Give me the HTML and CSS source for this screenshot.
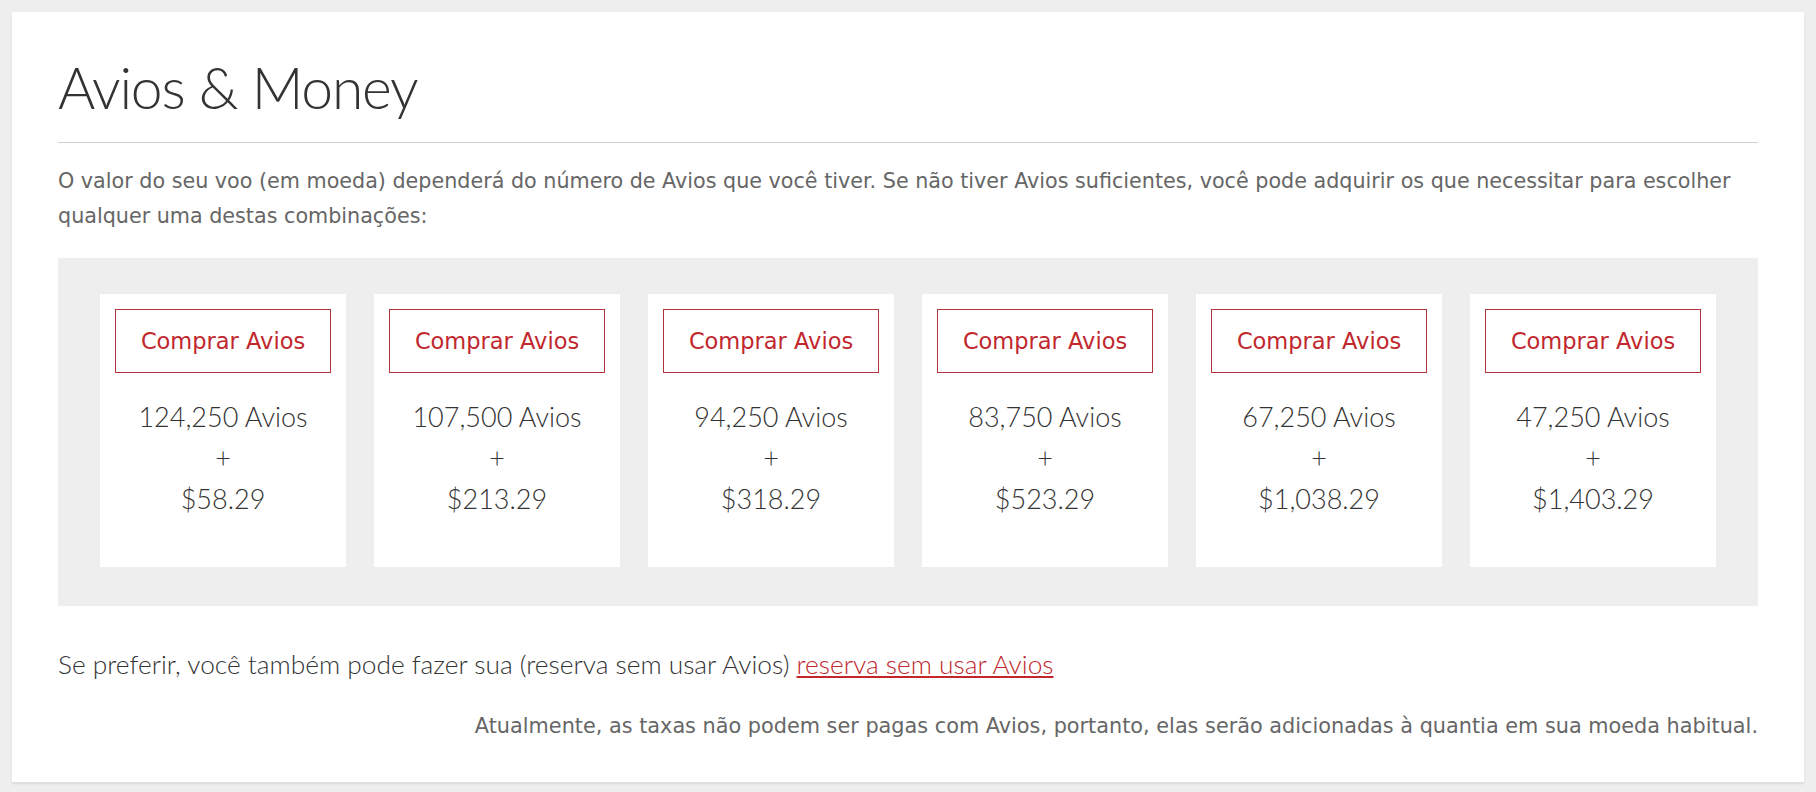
FILE: index.html
```html
<!DOCTYPE html>
<html lang="pt">
<head>
  <meta charset="UTF-8" />
  <meta name="viewport" content="width=device-width, initial-scale=1.0"/>
  <title>Avios &amp; Money</title>
  <link rel="stylesheet" href="styles.css">
</head>
<body>
  <div class="panel">
    <h1 class="title">Avios &amp; Money</h1>
    <hr class="rule">
    <p class="intro">O valor do seu voo (em moeda) dependerá do número de Avios que você tiver. Se não tiver Avios suficientes, você pode adquirir os que necessitar para escolher qualquer uma destas combinações:</p>

    <div class="options">
      <div class="option">
        <a class="buy" href="#">Comprar Avios</a>
        <div class="amount">124,250 Avios</div>
        <div class="amount">+</div>
        <div class="amount">$58.29</div>
      </div>
      <div class="option">
        <a class="buy" href="#">Comprar Avios</a>
        <div class="amount">107,500 Avios</div>
        <div class="amount">+</div>
        <div class="amount">$213.29</div>
      </div>
      <div class="option">
        <a class="buy" href="#">Comprar Avios</a>
        <div class="amount">94,250 Avios</div>
        <div class="amount">+</div>
        <div class="amount">$318.29</div>
      </div>
      <div class="option">
        <a class="buy" href="#">Comprar Avios</a>
        <div class="amount">83,750 Avios</div>
        <div class="amount">+</div>
        <div class="amount">$523.29</div>
      </div>
      <div class="option">
        <a class="buy" href="#">Comprar Avios</a>
        <div class="amount">67,250 Avios</div>
        <div class="amount">+</div>
        <div class="amount">$1,038.29</div>
      </div>
      <div class="option">
        <a class="buy" href="#">Comprar Avios</a>
        <div class="amount">47,250 Avios</div>
        <div class="amount">+</div>
        <div class="amount">$1,403.29</div>
      </div>
    </div>

    <p class="cash">Se preferir, você também pode fazer sua (reserva sem usar Avios) <a href="#">reserva sem usar Avios</a></p>
    <p class="note">Atualmente, as taxas não podem ser pagas com Avios, portanto, elas serão adicionadas à quantia em sua moeda habitual.</p>
  </div>
</body>
</html>
```

FILE: styles.css
```css
body {
  margin: 0;
  padding: 12px 12px 10px;
  background: #eeeeee;
  font-family: "DejaVu Sans", Verdana, sans-serif;
  color: #333;
}
.panel {
  background: #fff;
  padding: 41px 46px 39px;
  box-shadow: 0 2px 2px rgba(0, 0, 0, 0.08);
}
.title {
  margin: 0;
  font-family: Lato, sans-serif;
  font-weight: 300;
  font-size: 57px;
  letter-spacing: -1.2px;
  line-height: 1.2;
  color: #333;
}
.rule {
  margin: 21px 0 0;
  border: 0;
  border-top: 1px solid #cfcfcf;
}
.intro {
  margin: 21px 0 24px;
  font-size: 20.7px;
  line-height: 35px;
  color: #666;
}
.options {
  display: flex;
  gap: 28px;
  background: #eeeeee;
  padding: 36px 42px 39px;
}
.option {
  flex: 1;
  background: #fff;
  padding: 15px 15px 48px;
  text-align: center;
}
.buy {
  display: block;
  height: 62px;
  line-height: 62px;
  border: 1px solid #b3343d;
  color: #c1272d;
  font-size: 22.5px;
  text-decoration: none;
  margin-bottom: 23px;
}
.amount {
  font-family: Lato, sans-serif;
  font-weight: 300;
  font-size: 27px;
  line-height: 41px;
  color: #333;
}
.cash {
  margin: 43px 0 0;
  font-family: Lato, sans-serif;
  font-weight: 300;
  font-size: 26.3px;
  line-height: 30px;
  color: #333;
}
.cash a {
  color: #c1272d;
}
.note {
  margin: 30px 0 0;
  text-align: right;
  font-size: 20.8px;
  line-height: 34px;
  color: #666;
}
```
